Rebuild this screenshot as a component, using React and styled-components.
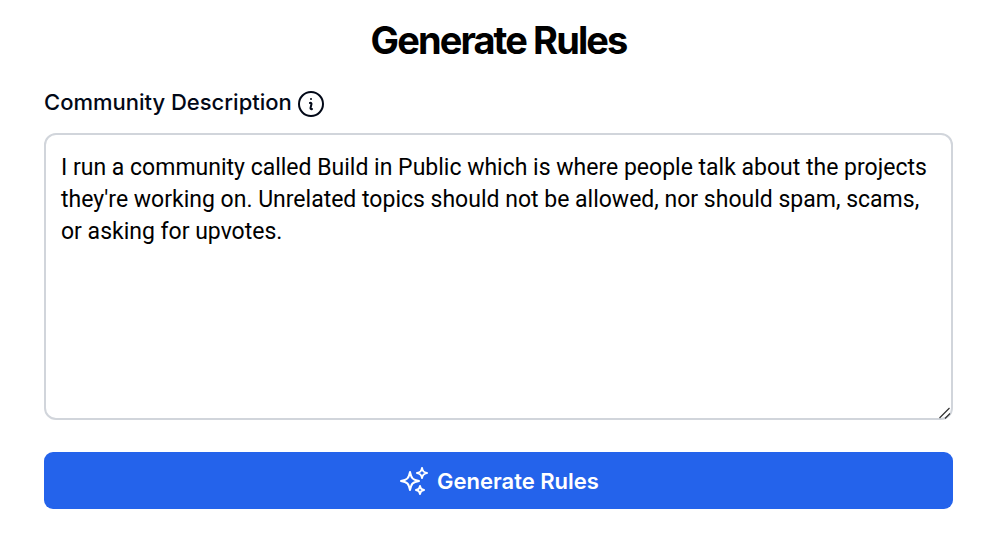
import React from "react";
import styled, { createGlobalStyle } from "styled-components";

const Global = createGlobalStyle`
  *, *::before, *::after { box-sizing: border-box; }
  body { margin: 0; background: #fff; font-family: Inter, "Liberation Sans", sans-serif; color: #020817; }
`;

const Page = styled.main`
  padding: 20px 47px 36px 44px;
`;

const Title = styled.h1`
  margin: 0;
  font-size: 38px;
  line-height: 40px;
  font-weight: 700;
  letter-spacing: -0.05em;
  text-align: center;
  color: #000;
`;

const Form = styled.form`
  display: flex;
  flex-direction: column;
  margin-top: 28px;
`;

const LabelRow = styled.div`
  display: flex;
  align-items: flex-start;
  gap: 3px;
`;

const Label = styled.label`
  font-size: 22px;
  line-height: 28px;
  font-weight: 500;
`;

const InfoButton = styled.button`
  display: flex;
  padding: 0;
  border: 0;
  background: none;
  color: inherit;
`;

const Field = styled.div`
  position: relative;
  margin-top: 13px;
`;

const Description = styled.textarea`
  display: block;
  width: 100%;
  height: 287px;
  padding: 17px 15px;
  border: 2px solid #d1d5db;
  border-radius: 12px;
  background: #fff;
  color: #000;
  font-family: Roboto, "Liberation Sans", sans-serif;
  font-size: 23px;
  line-height: 32px;
  resize: vertical;
  outline: none;

  &::-webkit-resizer {
    background: transparent;
  }
`;

const Grip = styled.svg`
  position: absolute;
  right: 2px;
  bottom: 1px;
  pointer-events: none;
`;

const SubmitButton = styled.button`
  display: flex;
  align-items: center;
  justify-content: center;
  gap: 7px;
  height: 57px;
  margin-top: 32px;
  border: 0;
  border-radius: 9px;
  background: #2463eb;
  color: #fff;
  font-family: inherit;
  font-size: 22px;
  line-height: 28px;
  font-weight: 600;
`;

const InfoIcon = () => (
  <svg width="32" height="32" viewBox="0 0 24 24" fill="none" stroke="currentColor" strokeWidth="1.5" strokeLinecap="round" strokeLinejoin="round" aria-hidden="true">
    <path d="m11.25 11.25.041-.02a.75.75 0 0 1 1.063.852l-.708 2.836a.75.75 0 0 0 1.063.853l.041-.021M21 12a9 9 0 1 1-18 0 9 9 0 0 1 18 0Zm-9-3.75h.008v.008H12V8.25Z" />
  </svg>
);

const SparklesIcon = () => (
  <svg width="32" height="32" viewBox="0 0 24 24" fill="none" stroke="currentColor" strokeWidth="1.5" strokeLinecap="round" strokeLinejoin="round" aria-hidden="true">
    <path d="M9.813 15.904 9 18.75l-.813-2.846a4.5 4.5 0 0 0-3.09-3.09L2.25 12l2.846-.813a4.5 4.5 0 0 0 3.09-3.09L9 5.25l.813 2.846a4.5 4.5 0 0 0 3.09 3.09L15.75 12l-2.846.813a4.5 4.5 0 0 0-3.09 3.09ZM18.259 8.715 18 9.75l-.259-1.035a3.375 3.375 0 0 0-2.455-2.456L14.25 6l1.036-.259a3.375 3.375 0 0 0 2.455-2.456L18 2.25l.259 1.035a3.375 3.375 0 0 0 2.456 2.456L21.75 6l-1.035.259a3.375 3.375 0 0 0-2.456 2.456ZM16.894 20.567 16.5 21.75l-.394-1.183a2.25 2.25 0 0 0-1.423-1.423L13.5 18.75l1.183-.394a2.25 2.25 0 0 0 1.423-1.423l.394-1.183.394 1.183a2.25 2.25 0 0 0 1.423 1.423l1.183.394-1.183.394a2.25 2.25 0 0 0-1.423 1.423Z" />
  </svg>
);

export default function App() {
  return (
    <>
      <Global />
      <Page>
        <Title>Generate Rules</Title>
        <Form onSubmit={(e) => e.preventDefault()}>
          <LabelRow>
            <Label htmlFor="description">Community Description</Label>
            <InfoButton type="button" aria-label="About the community description">
              <InfoIcon />
            </InfoButton>
          </LabelRow>
          <Field>
            <Description
              id="description"
              spellCheck={false}
              defaultValue="I run a community called Build in Public which is where people talk about the projects they're working on. Unrelated topics should not be allowed, nor should spam, scams, or asking for upvotes."
            />
            <Grip width="12" height="12" viewBox="0 0 12 12" fill="none" stroke="#333" strokeWidth="1.2" aria-hidden="true">
              <path d="M0.5 11 10.5 1M6 11.5 11 6.5" />
            </Grip>
          </Field>
          <SubmitButton type="submit">
            <SparklesIcon />
            Generate Rules
          </SubmitButton>
        </Form>
      </Page>
    </>
  );
}
